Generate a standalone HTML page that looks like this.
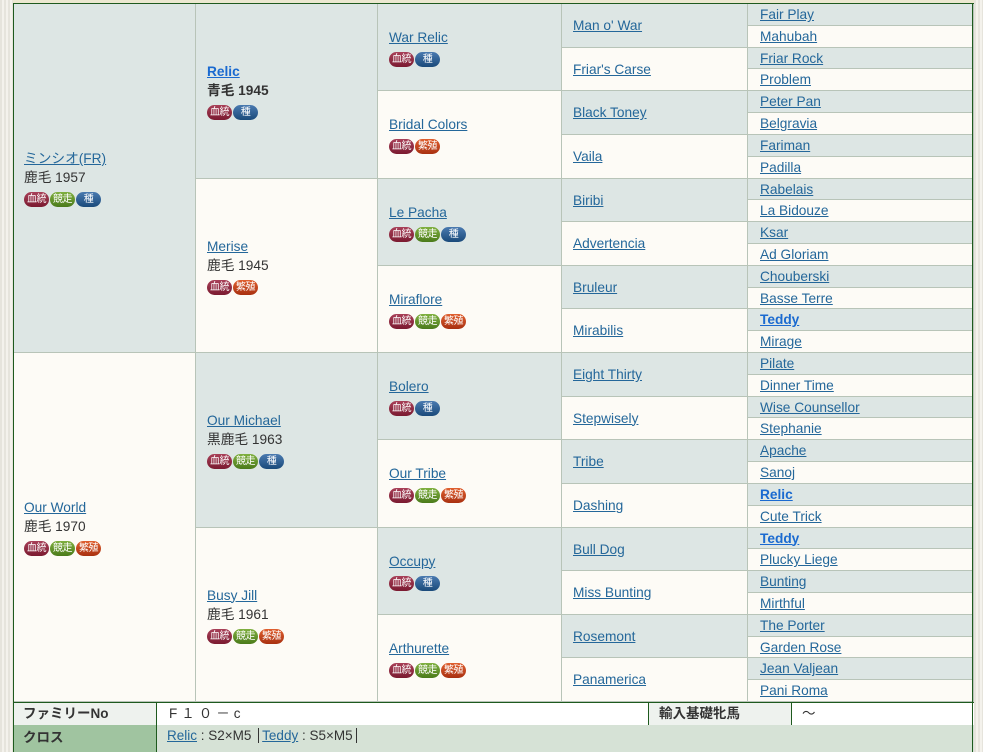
<!DOCTYPE html>
<html><head><meta charset="utf-8">
<style>
*{margin:0;padding:0;box-sizing:border-box}
body{width:983px;height:752px;overflow:hidden;background:#fdfbf6;font-family:"Liberation Sans","Noto Sans CJK JP",sans-serif;font-size:13.7px;color:#333;position:relative}
.strip{position:absolute;left:0;top:0;width:13px;height:752px;background:repeating-linear-gradient(90deg,#e6e4dc 0 2px,#f4f2ec 2px 4px)}
.stripr{position:absolute;left:974px;top:0;width:9px;height:752px;background:repeating-linear-gradient(90deg,#e6e4dc 0 2px,#f4f2ec 2px 4px)}
.topbar{position:absolute;left:13px;top:0;width:961px;height:4px;background:#ece8d0;border-bottom:1px solid #1e5a1e}
.c{position:absolute;border-right:1px solid #b8c4b8;border-bottom:1px solid #b8c4b8;display:flex;flex-direction:column;justify-content:center;padding-left:11px;line-height:19px}
.g{background:#dde6e4}.w{background:#fdfbf6}
a{color:#24679a;text-decoration:underline}
a.b{color:#1a6ad0;font-weight:bold}
.bd{display:flex;gap:1px;margin-top:5px}
.bd span{display:inline-block;width:25px;height:15px;border-radius:8px;color:#fff;font-size:10px;line-height:15px;text-align:center;overflow:hidden;white-space:nowrap;letter-spacing:-0.5px}
.r{background:linear-gradient(#a84058,#7a1a30)}
.gr{background:linear-gradient(#80b040,#4a7a1a)}
.bl{background:linear-gradient(#4a7ab0,#1a4a7a)}
.o{background:linear-gradient(#e06030,#a83010)}
.frame{position:absolute;left:13px;top:4px;width:960px;height:748px;border-left:1px solid #1e5a1e;border-right:1px solid #1e5a1e;pointer-events:none}
.f{position:absolute;font-size:13.5px;line-height:22px;padding-left:10px}
</style></head><body>
<div class="strip"></div><div class="stripr"></div>
<div class="topbar"></div>
<div id="p"></div>
<div class="f" style="left:13px;top:702px;width:961px;height:1px;background:#1e5a1e;padding:0"></div>
<div class="f" style="left:13px;top:703px;width:144px;height:22px;background:#eef2ee;font-weight:bold;border-right:1px solid #1e5a1e">ファミリーNo</div>
<div class="f" style="left:157px;top:703px;width:491px;height:22px;background:#fff;letter-spacing:4px;padding-left:12px">F１０－c</div>
<div class="f" style="left:648px;top:703px;width:144px;height:22px;background:#eef2ee;font-weight:bold;border-left:1px solid #1e5a1e;border-right:1px solid #1e5a1e">輸入基礎牝馬</div>
<div class="f" style="left:792px;top:703px;width:182px;height:22px;background:#fff">～</div>
<div class="f" style="left:13px;top:725px;width:144px;height:27px;background:#a0c4a0;font-weight:bold;line-height:25px;border-right:1px solid #1e5a1e">クロス</div>
<div class="f" style="left:157px;top:725px;width:817px;height:27px;background:#d6e2d6;line-height:22px"><a>Relic</a> : S2×M5 <span style="border-left:1px solid #333;margin:0 3px"></span><a>Teddy</a> : S5×M5 <span style="border-left:1px solid #333;margin-left:3px"></span></div>
<div class="frame"></div>
<script>
var H=698/32,T=4,X=[13,196,378,562,748,974];
function B(s){var m={r:'血統',g:'競走',b:'種',o:'繁殖'},c={r:'r',g:'gr',b:'bl',o:'o'};return '<div class="bd">'+s.split('').map(function(k){return '<span class="'+c[k]+'">'+m[k]+'</span>'}).join('')+'</div>'}
var g1=[['<div><a>ミンシオ(FR)</a></div><div>鹿毛 1957</div>','rgb'],['<div><a>Our World</a></div><div>鹿毛 1970</div>','rgo']];
var g2=[['<div><a class="b">Relic</a></div><div><b>青毛 1945</b></div>','rb'],['<div><a>Merise</a></div><div>鹿毛 1945</div>','ro'],['<div><a>Our Michael</a></div><div>黒鹿毛 1963</div>','rgb'],['<div><a>Busy Jill</a></div><div>鹿毛 1961</div>','rgo']];
var g3=[['War Relic','rb'],['Bridal Colors','ro'],['Le Pacha','rgb'],['Miraflore','rgo'],['Bolero','rb'],['Our Tribe','rgo'],['Occupy','rb'],['Arthurette','rgo']];
var g4="Man o' War|Friar's Carse|Black Toney|Vaila|Biribi|Advertencia|Bruleur|Mirabilis|Eight Thirty|Stepwisely|Tribe|Dashing|Bull Dog|Miss Bunting|Rosemont|Panamerica".split('|');
var g5="Fair Play|Mahubah|Friar Rock|Problem|Peter Pan|Belgravia|Fariman|Padilla|Rabelais|La Bidouze|Ksar|Ad Gloriam|Chouberski|Basse Terre|*Teddy|Mirage|Pilate|Dinner Time|Wise Counsellor|Stephanie|Apache|Sanoj|*Relic|Cute Trick|*Teddy|Plucky Liege|Bunting|Mirthful|The Porter|Garden Rose|Jean Valjean|Pani Roma".split('|');
var h='';
function cell(col,i,n,html){var y1=Math.round(T+i*n*H),y2=Math.round(T+(i+1)*n*H);h+='<div class="c '+(i%2?'w':'g')+'" style="left:'+X[col]+'px;top:'+y1+'px;width:'+(X[col+1]-X[col])+'px;height:'+(y2-y1)+'px'+(col==4?';padding-left:12px':'')+'">'+html+'</div>';}
g1.forEach(function(d,i){cell(0,i,16,d[0]+B(d[1]))});
g2.forEach(function(d,i){cell(1,i,8,d[0]+B(d[1]))});
g3.forEach(function(d,i){cell(2,i,4,'<div><a>'+d[0]+'</a></div>'+B(d[1]))});
g4.forEach(function(d,i){cell(3,i,2,'<div><a>'+d+'</a></div>')});
g5.forEach(function(d,i){cell(4,i,1,'<div>'+(d[0]=='*'?'<a class="b">'+d.slice(1)+'</a>':'<a>'+d+'</a>')+'</div>')});
document.getElementById('p').innerHTML=h;
</script>
</body></html>
